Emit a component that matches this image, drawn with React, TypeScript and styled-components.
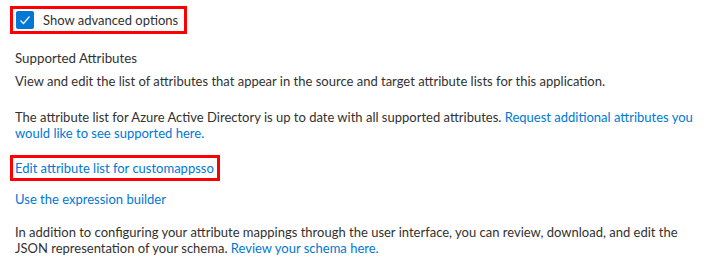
import React from "react";
import styled, { createGlobalStyle } from "styled-components";

const Global = createGlobalStyle`
  html, body { margin: 0; padding: 0; background: #fff; }
  body { font-family: "Segoe UI", Lato, "Liberation Sans", sans-serif; color: #323130; }
`;

const Page = styled.div`
  width: 715px;
  height: 266px;
  box-sizing: border-box;
  padding: 6px 0 0 10px;
  display: flex;
  flex-direction: column;
  align-items: flex-start;
  font-size: 13px;
  line-height: 16px;
`;

const Highlight = styled.div`
  border: 3px solid #ff0000;
  display: flex;
  align-items: center;
  box-sizing: border-box;
`;

const CheckRow = styled.label`
  display: flex;
  align-items: center;
  gap: 9px;
  padding: 2px 6px 2px 3px;
  font-size: 13px;
  color: #323130;
`;

const Box = styled.span`
  width: 18px;
  height: 18px;
  border-radius: 2px;
  background: #0078d4;
  display: flex;
  align-items: center;
  justify-content: center;
`;

const Section = styled.div`
  padding-left: 5px;
  width: 690px;
  box-sizing: border-box;
`;

const Title = styled.div`
  font-size: 13.3px;
  margin-top: 15px;
  line-height: 18px;
`;

const Para = styled.p<{ $mt?: number }>`
  margin: ${(p) => p.$mt ?? 0}px 0 0;
`;

const Link = styled.a`
  color: #0078d4;
  text-decoration: none;
  cursor: pointer;
`;

const LinkBox = styled(Highlight)`
  margin-top: 14px;
  padding: 2px 3px 2px 2px;
`;

export default function App() {
  return (
    <>
      <Global />
      <Page>
        <Highlight>
          <CheckRow>
            <Box>
              <svg width="12" height="12" viewBox="0 0 12 12">
                <path d="M1.5 6.5 L4.5 9.5 L10.5 2.5" stroke="#fff" strokeWidth="1.2" fill="none" />
              </svg>
            </Box>
            Show advanced options
          </CheckRow>
        </Highlight>
        <Section>
          <Title>Supported Attributes</Title>
          <Para $mt={6}>
            View and edit the list of attributes that appear in the source and target attribute lists for this application.
          </Para>
          <Para $mt={20}>
            The attribute list for Azure Active Directory is up to date with all supported attributes.{" "}
            <Link>Request additional attributes you would like to see supported here.</Link>
          </Para>
        </Section>
        <LinkBox>
          <Link>Edit attribute list for customappsso</Link>
        </LinkBox>
        <Section>
          <Para $mt={10}>
            <Link>Use the expression builder</Link>
          </Para>
          <Para $mt={17}>
            In addition to configuring your attribute mappings through the user interface, you can review, download, and edit the JSON representation of your schema.{" "}
            <Link>Review your schema here.</Link>
          </Para>
        </Section>
      </Page>
    </>
  );
}
